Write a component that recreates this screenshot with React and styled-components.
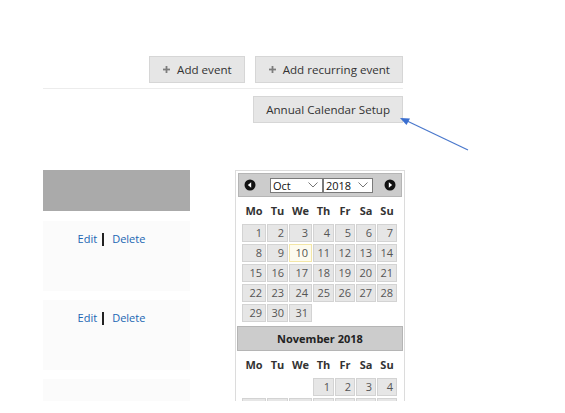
import React from 'react';
import styled, { createGlobalStyle } from 'styled-components';

const GlobalStyle = createGlobalStyle`
  body {
    margin: 0;
    background: #fff;
    font-family: 'Open Sans', 'Noto Sans', sans-serif;
  }
`;

const Page = styled.div`
  position: relative;
  width: 565px;
  height: 413px;
  overflow: hidden;
  padding-left: 43px;
  box-sizing: border-box;
`;

const TopArea = styled.div`
  width: 360px;
  padding-top: 56px;
`;

const Toolbar = styled.div`
  display: flex;
  justify-content: flex-end;
  gap: 10px;
  padding-bottom: 5px;
  border-bottom: 1px solid #ececec;
`;

const SetupRow = styled.div`
  display: flex;
  justify-content: flex-end;
  padding-top: 7px;
`;

const Button = styled.div`
  display: flex;
  align-items: center;
  gap: 7px;
  height: 27px;
  box-sizing: border-box;
  padding: 0 12px 0 ${p => (p.$wide ? 12 : 13)}px;
  background: #e6e6e6;
  border: 1px solid #d6d6d6;
  color: #333;
  font-size: 11.6px;
`;

const Plus = styled.svg`
  width: 7px;
  height: 7px;
  flex: none;
`;

/* the screenshot is cut off at the bottom, just below the first November row */
const Body = styled.div`
  display: flex;
  align-items: stretch;
  gap: 45px;
  margin-top: 47px;
  height: 231px;
  overflow: hidden;
`;

const List = styled.div`
  width: 147px;
  display: flex;
  flex-direction: column;
  gap: 9px;
`;

const ListHead = styled.div`
  height: 41px;
  flex: none;
  background: #aaaaaa;
  margin-bottom: 1px;
`;

const Card = styled.div`
  height: ${p => p.$h}px;
  flex: none;
  background: #fbfbfb;
  display: flex;
  justify-content: center;
  align-items: flex-start;
  padding: 10px 10px 0 0;
  box-sizing: border-box;
  font-size: 11px;
`;

const LinkText = styled.span`
  color: #2166b3;
`;

const Sep = styled.span`
  display: inline-block;
  width: 2px;
  height: 13px;
  background: #222;
  margin: 2px 8px 0 5px;
`;

const Calendar = styled.div`
  width: 170px;
  flex: none;
  box-sizing: border-box;
  border: 1px solid #dcdcdc;
  border-bottom: none;
  padding: 2px 2px 0;
`;

const Header = styled.div`
  height: 24px;
  box-sizing: border-box;
  background: #cccccc;
  border: 1px solid #b5b5b5;
  display: flex;
  align-items: center;
  justify-content: ${p => (p.$center ? 'center' : 'space-between')};
  padding: 0 5px;
  font-size: 11px;
  font-weight: bold;
  color: #222;
`;

const MonthHeader = styled(Header)`
  height: 25px;
  margin: 4px -1px 0;
`;

const Selects = styled.div`
  display: flex;
  margin-left: 5px;
  margin-right: 2px;
`;

const SelectBox = styled.div`
  width: ${p => p.$w}px;
  height: 15px;
  box-sizing: border-box;
  background: #fff;
  border: 1px solid #7a7a7a;
  display: flex;
  align-items: center;
  justify-content: space-between;
  padding: 0 4px 0 2px;
  font-size: 11px;
  font-weight: normal;
  color: #111;
`;

const Grid = styled.div`
  display: grid;
  grid-template-columns: 24px 21px 23px 21px 20px 20px 20px;
  grid-template-rows: 25px;
  grid-auto-rows: 18px;
  column-gap: 1px;
  row-gap: 2px;
  padding: 0 4px;
`;

const DayName = styled.div`
  line-height: 27px;
  text-align: center;
  font-size: 11px;
  font-weight: bold;
  color: #333;
`;

const Cell = styled.div`
  box-sizing: border-box;
  border: 1px solid ${p => (p.$today ? '#f3e6a6' : '#d3d3d3')};
  background: ${p => (p.$today ? '#fdfbef' : '#e6e6e6')};
  color: #555;
  font-size: 11px;
  line-height: 16px;
  text-align: right;
  padding-right: 3px;
`;

const Empty = styled.div``;

const Arrow = styled.svg`
  position: absolute;
  left: 395px;
  top: 110px;
`;

const Circle = ({ dir }) => (
  <svg width="12" height="12" viewBox="0 0 12 12">
    <circle cx="6" cy="6" r="5.5" fill="#111" />
    {dir === 'prev' ? (
      <polygon points="7.2,3.2 7.2,8.8 3.8,6" fill="#fff" />
    ) : (
      <polygon points="4.8,3.2 4.8,8.8 8.2,6" fill="#fff" />
    )}
  </svg>
);

const Chevron = () => (
  <svg width="10" height="6" viewBox="0 0 10 6">
    <polyline points="0.5,0.5 5,5 9.5,0.5" fill="none" stroke="#666" strokeWidth="0.9" />
  </svg>
);

const PlusIcon = () => (
  <Plus viewBox="0 0 7 7">
    <rect x="2.6" y="0" width="1.8" height="7" fill="#7d7d7d" />
    <rect x="0" y="2.6" width="7" height="1.8" fill="#7d7d7d" />
  </Plus>
);

const dayNames = ['Mo', 'Tu', 'We', 'Th', 'Fr', 'Sa', 'Su'];

const MonthGrid = ({ offset, days, today }) => {
  const items = [];
  for (let i = 0; i < offset; i++) items.push(<Empty key={'e' + i} />);
  for (let d = 1; d <= days; d++)
    items.push(
      <Cell key={d} $today={d === today}>
        {d}
      </Cell>
    );
  return (
    <Grid>
      {dayNames.map(n => (
        <DayName key={n}>{n}</DayName>
      ))}
      {items}
    </Grid>
  );
};

const Actions = () => (
  <>
    <LinkText>Edit</LinkText>
    <Sep />
    <LinkText>Delete</LinkText>
  </>
);

export default function App() {
  return (
    <>
      <GlobalStyle />
      <Page>
        <TopArea>
          <Toolbar>
            <Button>
              <PlusIcon />
              Add event
            </Button>
            <Button>
              <PlusIcon />
              Add recurring event
            </Button>
          </Toolbar>
          <SetupRow>
            <Button $wide>Annual Calendar Setup</Button>
          </SetupRow>
        </TopArea>

        <Body>
          <List>
            <ListHead />
            <Card $h={70}>
              <Actions />
            </Card>
            <Card $h={70}>
              <Actions />
            </Card>
            <Card $h={40} />
          </List>

          <Calendar>
            <Header>
              <Circle dir="prev" />
              <Selects>
                <SelectBox $w={53}>
                  Oct
                  <Chevron />
                </SelectBox>
                <SelectBox $w={50}>
                  2018
                  <Chevron />
                </SelectBox>
              </Selects>
              <Circle dir="next" />
            </Header>
            <MonthGrid offset={0} days={31} today={10} />
            <MonthHeader $center>November 2018</MonthHeader>
            <MonthGrid offset={3} days={30} today={0} />
          </Calendar>
        </Body>

        <Arrow width="80" height="50" viewBox="0 0 80 50">
          <line x1="73" y1="40" x2="10" y2="10" stroke="#4a78cc" strokeWidth="1.2" />
          <polygon points="5,8 15,8.5 11.5,15" fill="#3b6fd0" />
        </Arrow>
      </Page>
    </>
  );
}
